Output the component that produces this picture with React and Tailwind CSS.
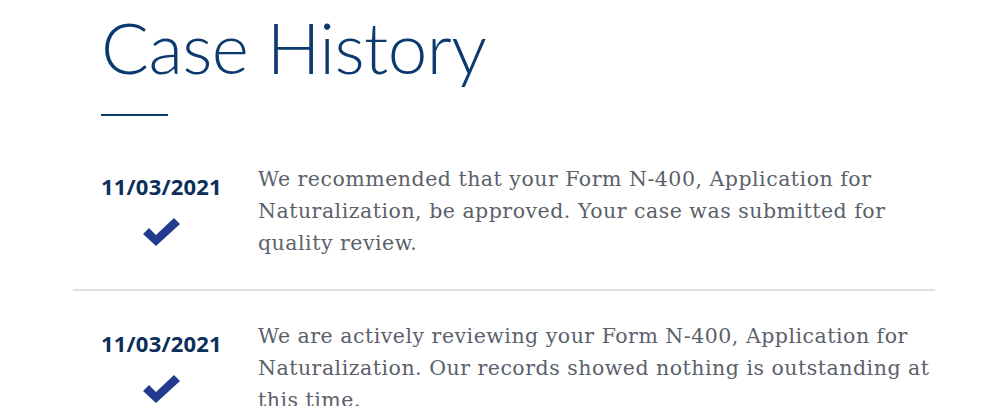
import React from 'react';

const entries = [
  {
    date: '11/03/2021',
    text: 'We recommended that your Form N-400, Application for Naturalization, be approved. Your case was submitted for quality review.',
  },
  {
    date: '11/03/2021',
    text: 'We are actively reviewing your Form N-400, Application for Naturalization. Our records showed nothing is outstanding at this time.',
  },
];

const Check = () => (
  <svg width="38" height="28" viewBox="0 0 38 28" className="block">
    <path d="M0 16 L6 10 L13 17 L31 0 L37 6 L13 28 Z" fill="#233a8e" />
  </svg>
);

const App = () => {
  return (
    <div className="min-h-[406px] bg-white overflow-hidden">
      <div className="ml-[73px] w-[862px]">
        <div className="pl-[28px] pt-[7px]">
          <h1 className="text-[71px] leading-[80px] font-light text-[#0b3a6e] tracking-[-0.6px]" style={{ fontFamily: 'Lato, sans-serif' }}>
            Case History
          </h1>
          <div className="mt-[27px] w-[67px] h-[2px] bg-[#0b3a6e]" />
        </div>

        <div className="mt-[47px]">
          {entries.map((e, i) => (
            <div key={i} className={`flex pl-[28px] pb-[30px] ${i === 0 ? 'border-b-2 border-[#e0e0e0]' : 'pt-[29px]'}`}>
              <div className="w-[157px] shrink-0 flex flex-col items-start">
                <div className="w-[120px] text-center pt-[7px] text-[22px] font-bold text-[#0b2f5b] tracking-[0.2px]" style={{ fontFamily: '"Open Sans", sans-serif' }}>
                  {e.date}
                </div>
                <div className="w-[120px] flex justify-center mt-[15px] pl-[2px]">
                  <Check />
                </div>
              </div>
              <p className="flex-1 min-w-0 text-[20.5px] leading-[32px] text-[#5b616b] tracking-[0.5px]" style={{ fontFamily: '"DejaVu Serif", serif' }}>
                {e.text}
              </p>
            </div>
          ))}
        </div>
      </div>
    </div>
  );
};

export default App;
